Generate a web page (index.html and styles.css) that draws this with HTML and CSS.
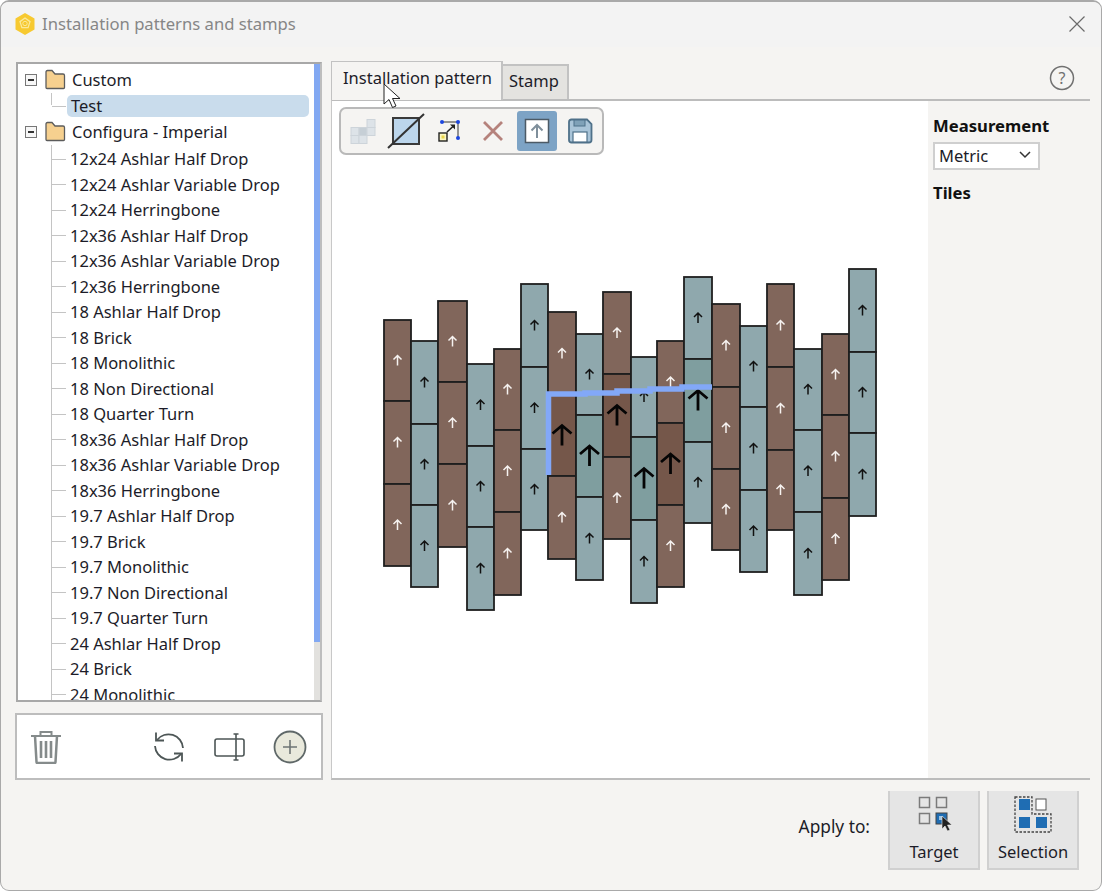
FILE: index.html
```html
<!DOCTYPE html>
<html>
<head>
  <meta charset="UTF-8">
  <title>Installation patterns and stamps</title>
  <link rel="stylesheet" href="styles.css">
</head>
<body>
  <div class="window">
    <div class="titlebar">
      <svg class="app-icon" width="22" height="24" viewBox="0 0 22 24">
        <path d="M11 1l9.500 5.500v11L11 23l-9.500-5.500v-11z" fill="#f7c930"/>
        <path d="M11 6l5 3.600-1.900 6H7.900L6 9.600z" fill="none" stroke="#fbe99a" stroke-width="1.300"/>
        <circle cx="11" cy="11.500" r="2.200" fill="none" stroke="#fbe99a" stroke-width="1"/>
      </svg>
      <span class="title-text">Installation patterns and stamps</span>
      <svg class="close-icon" width="16" height="16" viewBox="0 0 16 16">
        <path d="M.5.5l15 15M15.500.5l-15 15" stroke="#6a6a6a" stroke-width="1.200" fill="none"/>
      </svg>
    </div>

    <div class="content">
      <div class="left-col">
        <div class="tree-box">
          <div class="tree">
            <div class="tree-row folder-row">
              <span class="expander"></span>
              <svg class="folder" width="21" height="21" viewBox="0 0 21 21"><path d="M1 18.500V3q0-1.500 1.500-1.500h4.500l3 3.500h8q1.500 0 1.500 1.500v12q0 1-1 1H2q-1 0-1-1z" fill="#f6d08f" stroke="#5c5c5c" stroke-width="1.300"/></svg>
              <span>Custom</span>
            </div>
            <div class="kids short">
              <div class="tree-row kid selected"><span>Test</span></div>
            </div>
            <div class="tree-row folder-row">
              <span class="expander"></span>
              <svg class="folder" width="21" height="21" viewBox="0 0 21 21"><path d="M1 18.500V3q0-1.500 1.500-1.500h4.500l3 3.500h8q1.500 0 1.500 1.500v12q0 1-1 1H2q-1 0-1-1z" fill="#f6d08f" stroke="#5c5c5c" stroke-width="1.300"/></svg>
              <span>Configura - Imperial</span>
            </div>
            <div class="kids">
              <div class="tree-row kid"><span>12x24 Ashlar Half Drop</span></div>
              <div class="tree-row kid"><span>12x24 Ashlar Variable Drop</span></div>
              <div class="tree-row kid"><span>12x24 Herringbone</span></div>
              <div class="tree-row kid"><span>12x36 Ashlar Half Drop</span></div>
              <div class="tree-row kid"><span>12x36 Ashlar Variable Drop</span></div>
              <div class="tree-row kid"><span>12x36 Herringbone</span></div>
              <div class="tree-row kid"><span>18 Ashlar Half Drop</span></div>
              <div class="tree-row kid"><span>18 Brick</span></div>
              <div class="tree-row kid"><span>18 Monolithic</span></div>
              <div class="tree-row kid"><span>18 Non Directional</span></div>
              <div class="tree-row kid"><span>18 Quarter Turn</span></div>
              <div class="tree-row kid"><span>18x36 Ashlar Half Drop</span></div>
              <div class="tree-row kid"><span>18x36 Ashlar Variable Drop</span></div>
              <div class="tree-row kid"><span>18x36 Herringbone</span></div>
              <div class="tree-row kid"><span>19.7 Ashlar Half Drop</span></div>
              <div class="tree-row kid"><span>19.7 Brick</span></div>
              <div class="tree-row kid"><span>19.7 Monolithic</span></div>
              <div class="tree-row kid"><span>19.7 Non Directional</span></div>
              <div class="tree-row kid"><span>19.7 Quarter Turn</span></div>
              <div class="tree-row kid"><span>24 Ashlar Half Drop</span></div>
              <div class="tree-row kid"><span>24 Brick</span></div>
              <div class="tree-row kid"><span>24 Monolithic</span></div>
            </div>
          </div>
          <div class="scrollbar"><div class="scroll-thumb"></div></div>
        </div>

        <div class="tool-box">
          <svg class="trash" width="32" height="34" viewBox="0 0 32 34" fill="none" stroke="#858b8b" stroke-width="2">
            <path d="M1 6h30M10.500 6V2h11v4"/>
            <path d="M5 6l1.500 26q0 1 1 1h17q1 0 1-1L27 6" stroke-width="2.500"/>
            <path d="M11 11v17M16 11v17M21 11v17" stroke-width="2.600"/>
          </svg>
          <svg class="refresh" width="34" height="34" viewBox="0 0 34 34" fill="none" stroke="#4d5656" stroke-width="1.800">
            <path d="M5 10A14.500 14.500 0 0 1 31 18"/>
            <path d="M29 24A14.500 14.500 0 0 1 3 16"/>
            <path d="M4 2.500V10.500H12"/>
            <path d="M30 31.500V23.500H22"/>
          </svg>
          <svg class="rename" width="32" height="28" viewBox="0 0 32 28" fill="none" stroke="#4d5656" stroke-width="1.600">
            <rect x="1" y="6" width="29" height="17" rx="2"/>
            <path d="M22 1v26M19.500 1h5M19.500 27h5"/>
          </svg>
          <svg class="plus" width="34" height="34" viewBox="0 0 34 34">
            <circle cx="17" cy="17" r="15.500" fill="#e9e9dc" stroke="#5f6868" stroke-width="1.800"/>
            <path d="M17 10v14M10 17h14" stroke="#6d7474" stroke-width="1.600"/>
          </svg>
        </div>
      </div>

      <div class="right-col">
        <div class="tab-row">
          <div class="tab active">Installation pattern</div>
          <div class="tab">Stamp</div>
          <svg class="help-icon" width="26" height="26" viewBox="0 0 26 26">
            <circle cx="13" cy="13" r="11.500" fill="none" stroke="#707070" stroke-width="1.500"/>
            <text x="13" y="18.500" text-anchor="middle" class="help-mark">?</text>
          </svg>
        </div>

        <div class="panel">
          <div class="canvas">
            <div class="toolbar">
              <div class="tool">
                <svg width="26" height="26" viewBox="0 0 26 26">
                  <g fill="#dde3e8" stroke="#cdd4da">
                    <rect x="17" y="1.500" width="8" height="8"/>
                    <rect x="1" y="9.500" width="8" height="8"/>
                    <rect x="9" y="9.500" width="8" height="8" fill="#c6cfd6"/>
                    <rect x="17" y="9.500" width="8" height="8"/>
                    <rect x="1" y="17.500" width="8" height="8"/>
                    <rect x="9" y="17.500" width="8" height="8"/>
                  </g>
                </svg>
              </div>
              <div class="tool">
                <svg width="38" height="36" viewBox="0 0 38 36">
                  <rect x="6" y="5" width="26" height="26" fill="#bcd6ec" stroke="#3a3a3a" stroke-width="2"/>
                  <path d="M1 35L37 1" stroke="#333" stroke-width="2"/>
                </svg>
              </div>
              <div class="tool">
                <svg width="26" height="26" viewBox="0 0 26 26">
                  <path d="M5 4h16v16" fill="none" stroke="#333" stroke-width="1"/>
                  <rect x="2" y="15" width="8" height="8" fill="#fbf6c0" stroke="#222" stroke-width="1.400"/>
                  <rect x="4.500" y="17.500" width="3" height="3" fill="#e8d44a"/>
                  <path d="M10 14l6-5.500" stroke="#222" stroke-width="1.600" fill="none"/>
                  <path d="M13 6.500h5v5z" fill="#222"/>
                  <g fill="#1c46e0"><circle cx="5" cy="4" r="2"/><circle cx="21" cy="4" r="2"/><circle cx="21" cy="20" r="2"/></g>
                </svg>
              </div>
              <div class="tool">
                <svg width="20" height="20" viewBox="0 0 20 20">
                  <path d="M1 1l18 18M19 1L1 19" stroke="#b5827c" stroke-width="2.800" fill="none"/>
                </svg>
              </div>
              <div class="tool tool-on">
                <svg width="26" height="26" viewBox="0 0 26 26">
                  <rect x="1.500" y="1.500" width="23" height="23" fill="#fff" stroke="#4c5a66" stroke-width="1.500"/>
                  <path d="M13 20V7M7.500 12.500L13 7l5.500 5.500" fill="none" stroke="#7f8f9b" stroke-width="2"/>
                </svg>
              </div>
              <div class="tool">
                <svg width="26" height="26" viewBox="0 0 26 26">
                  <path d="M2 4q0-2.500 2.500-2.500H20L24.500 6v16q0 2.500-2.500 2.500H4.500Q2 24.500 2 22z" fill="#a9c4d8" stroke="#4f7189" stroke-width="1.800"/>
                  <rect x="7" y="2" width="11" height="6" fill="#7fa1b8" stroke="#4f7189"/>
                  <rect x="6" y="14" width="14" height="10" fill="#fff" stroke="#4f7189" stroke-width="1.200"/>
                </svg>
              </div>
            </div>
            <svg id="tiles" class="tiles" width="596" height="530" viewBox="332 155 596 530"></svg>
          </div>

          <div class="side">
            <div class="side-label">Measurement</div>
            <div class="select">
              <span>Metric</span>
              <svg width="12" height="8" viewBox="0 0 12 8"><path d="M1 1l5 5 5-5" fill="none" stroke="#333" stroke-width="1.500"/></svg>
            </div>
            <div class="side-label tiles-label">Tiles</div>
          </div>
        </div>
      </div>
    </div>

    <div class="footer">
      <span class="apply-label">Apply to:</span>
      <div class="apply-btn">
        <svg width="38" height="36" viewBox="0 0 38 36">
          <g fill="none" stroke="#7b7b7b" stroke-width="1.500">
            <rect x="4.500" y="1.500" width="10" height="10"/>
            <rect x="21.500" y="1.500" width="10" height="10"/>
            <rect x="4.500" y="17.500" width="10" height="10"/>
          </g>
          <rect x="21" y="17" width="11" height="11" fill="#1f6db3" stroke="#444"/>
          <rect x="24" y="20" width="4" height="4" fill="#9cc3e3"/>
          <path d="M27 20v13l3-3 2.500 5 2.500-1-2.500-5h4.500z" fill="#222" stroke="#eee" stroke-width=".6"/>
        </svg>
        <span>Target</span>
      </div>
      <div class="apply-btn">
        <svg width="38" height="38" viewBox="0 0 38 38">
          <path d="M1 1h17v17h19v18H1z" fill="none" stroke="#444" stroke-width="1.300" stroke-dasharray="2.500 1.500"/>
          <rect x="5" y="3" width="11" height="11" fill="#1f6db3"/>
          <rect x="22" y="3" width="10" height="11" fill="#fff" stroke="#555"/>
          <rect x="5" y="21" width="11" height="11" fill="#1f6db3"/>
          <rect x="22" y="21" width="11" height="11" fill="#1f6db3"/>
        </svg>
        <span>Selection</span>
      </div>
    </div>

    <svg class="cursor" width="20" height="28" viewBox="0 0 20 28">
      <path d="M1 1v20l5-4.500 3.500 8 3.500-1.500-3.500-7.500H17z" fill="#fff" stroke="#222" stroke-width="1"/>
    </svg>
  </div>

  <script src="tiles.js"></script>
</body>
</html>
```

FILE: styles.css
```css
body {
  margin: 0;
  background: #fff;
  font-family: "Noto Sans", "Open Sans", sans-serif;
  font-size: 16.500px;
  color: #1c1c28;
  overflow: hidden;
}

.window {
  position: relative;
  box-sizing: border-box;
  width: 1102px;
  height: 891px;
  display: flex;
  flex-direction: column;
  background: #f5f4f2;
  border: 1px solid #a9a9a9;
  border-top-width: 2px;
  border-radius: 9px;
  overflow: hidden;
}

.titlebar {
  display: flex;
  align-items: center;
  height: 45px;
  flex: none;
  padding: 0 16px 2px 13px;
  box-sizing: border-box;
  background: #f3f3f3;
}

.app-icon {
  margin-right: 6px;
}

.title-text {
  margin-bottom: 1px;
  color: #868686;
  font-size: 16.650px;
}

.close-icon {
  margin-left: auto;
}

.content {
  display: flex;
  height: 733px;
  flex: none;
}

/* left column: tree and its tools */
.left-col {
  width: 308px;
  margin-left: 14px;
  padding-top: 15px;
  flex: none;
}

.tree-box {
  box-sizing: border-box;
  display: flex;
  width: 306px;
  height: 640px;
  margin-left: 1px;
  background: #fff;
  border: 2px solid #a8a8a8;
  border-right-color: #bdbdbd;
}

.tree {
  flex: 1;
  overflow: hidden;
  padding-top: 3px;
}

.tree-row {
  display: flex;
  align-items: center;
  height: 25.600px;
  white-space: nowrap;
}

.folder-row {
  padding-left: 7px;
}

.expander {
  position: relative;
  box-sizing: border-box;
  width: 12px;
  height: 12px;
  margin-right: 8px;
  border: 1px solid #777;
  background: #f7f7f7;
}

.expander::after {
  content: "";
  position: absolute;
  left: 2px;
  top: 4px;
  width: 6px;
  height: 2px;
  background: #333;
}

.folder {
  margin-right: 6px;
}

.kids {
  margin-left: 33px;
  padding-top: 1px;
  border-left: 1px solid #c4c4c4;
}

.kids.short {
  height: 10.800px;
  padding-top: 2px;
}

.kid {
  position: relative;
  height: 25.500px;
  padding-left: 18px;
}

.kid::before {
  content: "";
  position: absolute;
  left: 0;
  top: 12.800px;
  width: 14px;
  height: 1px;
  background: #c4c4c4;
}

.selected {
  margin-left: 15px;
  padding-left: 4px;
  width: 238px;
  height: 22px;
  background: #c9dcec;
  border-radius: 5px;
}

.selected::before {
  left: -15px;
  top: 11px;
}

.kids.short + .folder-row {
  margin-top: 13.800px;
}

.scrollbar {
  flex: none;
  width: 6px;
  background: #e2e1de;
}

.scroll-thumb {
  height: 578px;
  background: #82a8f2;
}

.tool-box {
  display: flex;
  align-items: center;
  box-sizing: border-box;
  width: 308px;
  height: 67px;
  margin-top: 11px;
  padding-left: 13px;
  background: #fff;
  border: 2px solid #bdbdbd;
}

.refresh {
  margin-left: 90px;
}

.rename {
  margin-left: 28px;
}

.plus {
  margin-left: 27px;
}

/* right column: tabs and pattern panel */
.right-col {
  display: flex;
  flex-direction: column;
  width: 759px;
  margin-left: 8px;
  padding-top: 14px;
  flex: none;
}

.tab-row {
  display: flex;
  align-items: flex-end;
  height: 38px;
  flex: none;
}

.tab {
  box-sizing: border-box;
  height: 35px;
  padding: 3px 8px 0 6px;
  background: #e4e3e0;
  border: 2px solid #c2c2c2;
  border-bottom: 0;
  border-left: 0;
}

.tab.active {
  position: relative;
  z-index: 1;
  height: 39px;
  margin-bottom: -1px;
  padding: 4px 9px 0 11px;
  background: #f5f4f2;
  border-width: 1px 2px 0 1px;
  border-style: solid;
  border-color: #c2c2c2;
}

.help-icon {
  margin: 0 15px 8px auto;
}

.panel {
  display: flex;
  flex: 1;
  border-top: 2px solid #bcbcbc;
  border-bottom: 2px solid #bcbcbc;
  border-left: 1px solid #c8c8c8;
}

.canvas {
  width: 596px;
  flex: none;
  background: #fff;
}

.toolbar {
  display: flex;
  align-items: center;
  gap: 3.500px;
  box-sizing: border-box;
  width: 265px;
  height: 48px;
  margin: 6px 0 0 7px;
  padding: 0 2px;
  background: #f5f4f2;
  border: 2px solid #b9b9b9;
  border-radius: 7px;
}

.tool {
  display: flex;
  align-items: center;
  justify-content: center;
  width: 40px;
  height: 40px;
  border-radius: 3px;
}

.tool-on {
  background: #7da3c5;
}

.tiles {
  display: block;
}

.side {
  flex: 1;
  padding: 13px 0 0 5px;
}

.side-label {
  font-weight: 700;
  color: #111;
  font-size: 16.700px;
  line-height: 24px;
}

.select {
  display: flex;
  align-items: center;
  justify-content: space-between;
  box-sizing: border-box;
  width: 107px;
  height: 28px;
  margin-top: 4px;
  padding: 0 7px 2px 4px;
  background: #fff;
  border: 2px solid #cfcfcf;
}

.tiles-label {
  margin-top: 11px;
}

.footer {
  display: flex;
  align-items: flex-start;
  justify-content: flex-end;
  gap: 7px;
  flex: 1;
  padding: 11px 22px 0 0;
}

.apply-label {
  margin: 24px 11px 0 0;
  font-size: 17.300px;
}

.apply-btn {
  display: flex;
  flex-direction: column;
  align-items: center;
  justify-content: space-between;
  box-sizing: border-box;
  width: 92px;
  height: 79px;
  padding: 5px 0 5px;
  background: #e5e5e5;
  border: 2px solid #d0d0d0;
  border-top: 0;
}

.cursor {
  position: absolute;
  z-index: 2;
  left: 382px;
  top: 81px;
}

.help-mark {
  font-size: 16px;
  fill: #707070;
}

.tile-brown { fill: #81665b; }
.tile-teal { fill: #8fa8ad; }
.tile-brown.hot { fill: #75574a; }
.tile-teal.hot { fill: #7f9e9f; }
.tile { stroke: #1e1e1e; stroke-width: 1.800; }

.arrow { fill: none; stroke-width: 1.500; }
.arrow-light { stroke: #f6f2f0; }
.arrow-dark { stroke: #111; }
.arrow.hot { stroke: #050505; stroke-width: 2.800; }

.guide { fill: none; stroke: #82a8f8; stroke-width: 5.500; }
```

FILE: tiles.js
```js
// Columns of the stamp: left edge, right edge, row edges
const columns = [
  [384, 411, [320, 401, 484, 566]],
  [411, 438, [341, 424, 505, 587]],
  [438, 467, [301, 382, 464, 547]],
  [467, 494, [364, 446, 527, 610]],
  [494, 521, [349, 430, 512, 595]],
  [521, 548, [284, 367, 449, 530]],
  [548, 576, [312, 395, 476, 559]],
  [576, 603, [334, 415, 497, 580]],
  [603, 631, [292, 374, 457, 539]],
  [631, 657, [357, 437, 520, 603]],
  [657, 684, [341, 423, 505, 587]],
  [684, 712, [277, 359, 442, 523]],
  [712, 740, [304, 387, 469, 550]],
  [740, 767, [326, 407, 490, 572]],
  [767, 794, [284, 367, 450, 530]],
  [794, 822, [349, 430, 512, 595]],
  [822, 849, [334, 415, 498, 580]],
  [849, 876, [269, 352, 433, 516]]
];

let svg = '';

columns.forEach(function(col, i) {
  const x0 = col[0];
  const x1 = col[1];
  const edges = col[2];
  const brown = i % 2 === 0;

  for (let row = 0; row < 3; row++) {
    // middle row of columns 7 to 12 is the selected stamp
    const hot = row === 1 && i >= 6 && i <= 11;
    const y0 = edges[row];
    const y1 = edges[row + 1];
    const cx = (x0 + x1) / 2;
    const cy = (y0 + y1) / 2;
    const tileClass = 'tile ' + (brown ? 'tile-brown' : 'tile-teal') + (hot ? ' hot' : '');
    const arrowClass = 'arrow ' + (hot ? 'hot' : brown ? 'arrow-light' : 'arrow-dark');
    const d = hot ? 'M0 10V-10M-9.500 -2L0 -10L9.500 -2' : 'M0 5V-5M-4 -1L0 -5L4 -1';

    svg += `<rect class="${tileClass}" x="${x0}" y="${y0}" width="${x1 - x0}" height="${y1 - y0}"/>`;
    svg += `<path class="${arrowClass}" transform="translate(${cx} ${cy})" d="${d}"/>`;
  }
});

svg += '<path class="guide" d="M548.500 475V394H585V393H617V391H650V389H682V387H712"/>';

document.getElementById('tiles').innerHTML = svg;
```
